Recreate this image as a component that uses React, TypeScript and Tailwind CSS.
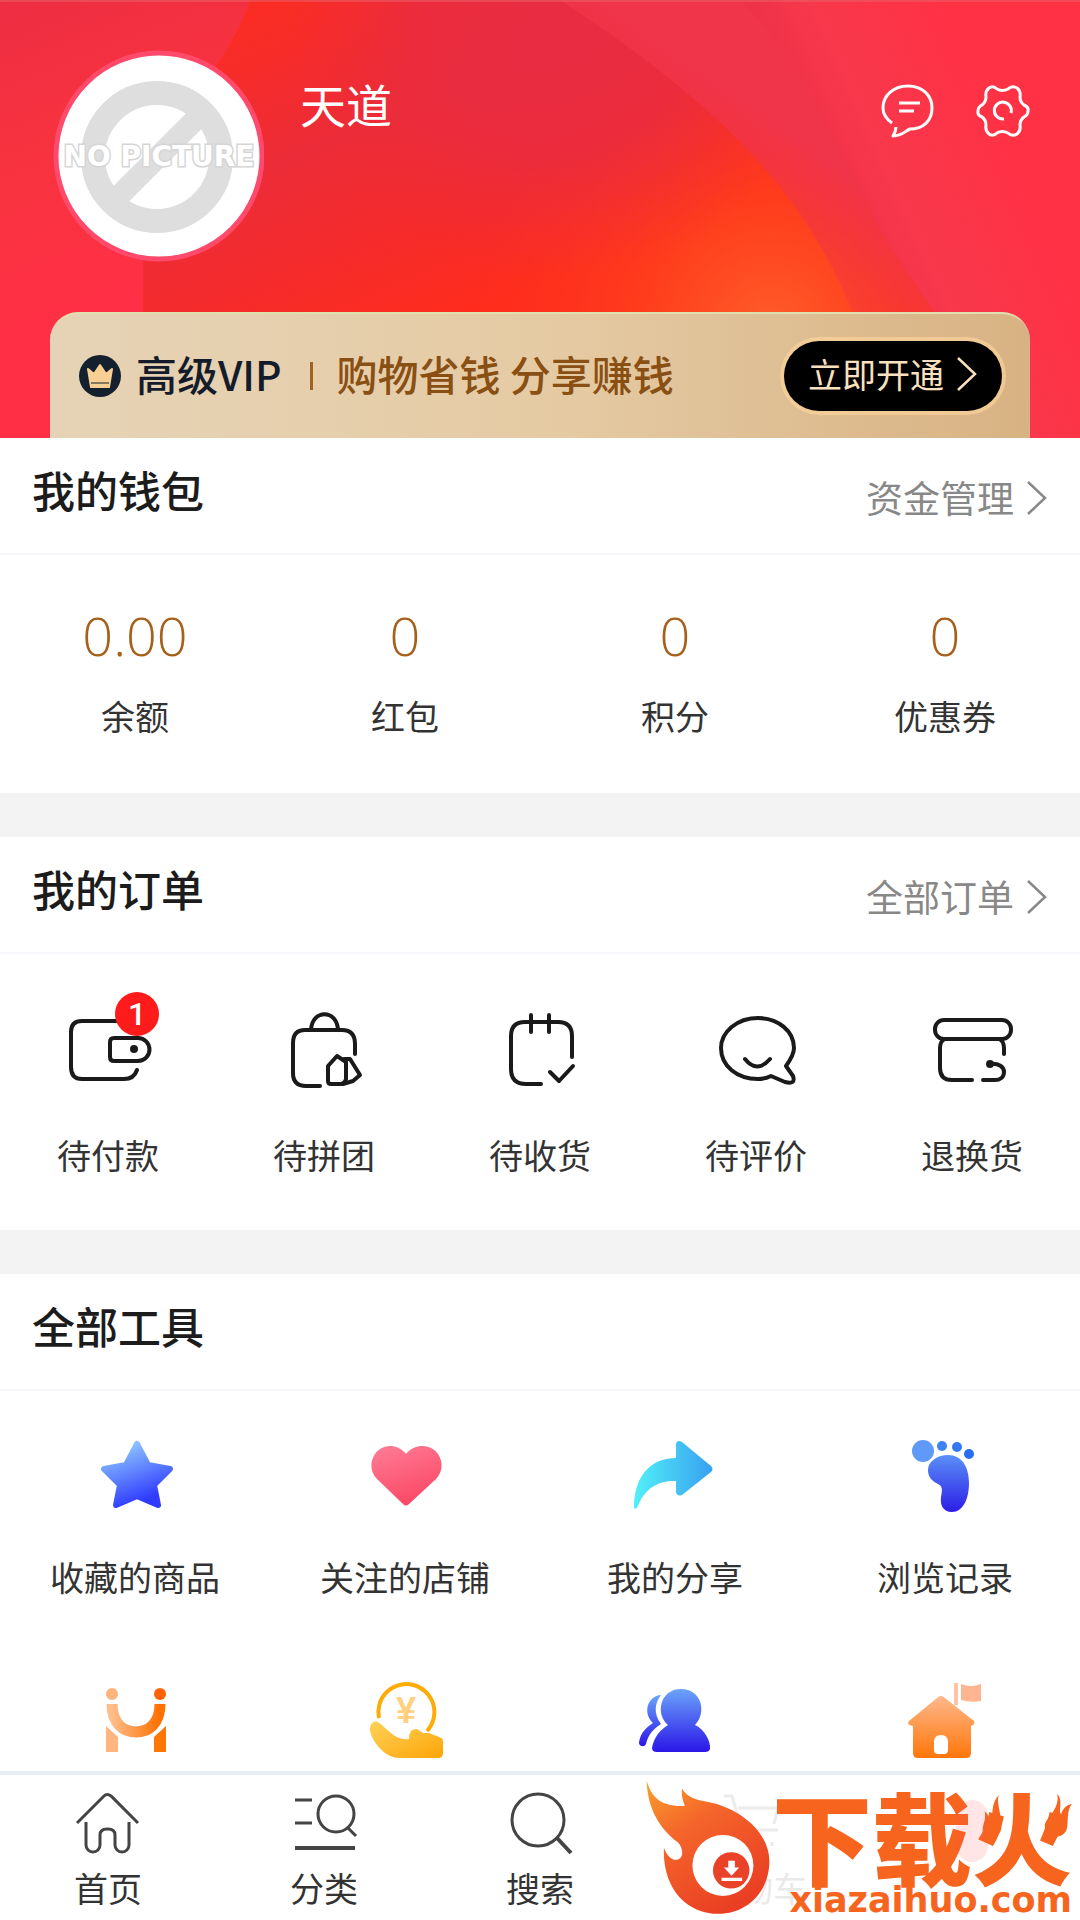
import type { ReactNode } from "react";

const wallet = [
  { value: "0.00", label: "余额" },
  { value: "0", label: "红包" },
  { value: "0", label: "积分" },
  { value: "0", label: "优惠券" },
];

const orders = [
  {
    label: "待付款",
    badge: 1,
    icon: (
      <>
        <path d="M56 15H18Q7 15 7 26V61Q7 73 18 73H60Q70 73 73 64" />
        <path d="M50 32H74a11.5 11.5 0 0 1 0 23H50q-4 0-4-4V36q0-4 4-4z" />
        <circle cx="70" cy="43" r="2" />
      </>
    ),
  },
  {
    label: "待拼团",
    icon: (
      <>
        <path d="M75 48V38Q75 24 62 24H25Q13 24 13 37V67Q13 80 26 80H40" />
        <path d="M31 24C32 3 57 3 58 24" />
        <path d="M48 60L57 50L66 56V73Q65 78 60 78H51Q48 78 48 75Z" />
        <path d="M64 53H70L80 69L73 75L63 78" />
      </>
    ),
  },
  {
    label: "待收货",
    icon: (
      <>
        <path d="M76 51V30Q76 16 62 16H29Q15 16 15 30V63Q15 78 30 78H45" />
        <path d="M35 9V26M53 9V26" />
        <path d="M54 66L63 75L77 60" />
      </>
    ),
  },
  {
    label: "待评价",
    icon: (
      <>
        <path d="M74 60C79 53 82 48 82 42C82 25 66 12 46 12C25 12 9 26 9 42C9 60 25 73 46 73Q53 73 59 70L73 76Q84 79 81 70Z" />
        <path d="M33 53Q45 68 58 53" />
      </>
    ),
  },
  {
    label: "退换货",
    icon: (
      <>
        <rect x="7" y="14" width="76" height="19" rx="9" />
        <path d="M76 48V42Q76 35 71 33M17 33Q12 35 12 42V62Q12 74 24 74H44" />
        <path d="M62 58C71 57 76 61 76 66C76 71 72 74 67 74H55" />
        <circle cx="62" cy="58" r="2" />
      </>
    ),
  },
];

const tools = [
  {
    label: "收藏的商品",
    icon: (
      <path
        d="M46 14L57 35L79 39L63 55L67 75L46 66L25 75L29 55L13 39L35 35Z"
        fill="url(#star)"
        stroke="url(#star)"
        strokeWidth="6"
        strokeLinejoin="round"
      />
    ),
  },
  {
    label: "关注的店铺",
    icon: (
      <path
        d="M45 24C36 13 21 14 14 24C8 33 10 43 16 49L42 74Q45 77 48 74L75 49C81 43 83 33 77 24C70 14 54 13 45 24Z"
        fill="url(#heart)"
      />
    ),
  },
  {
    label: "我的分享",
    icon: (
      <path
        d="M3 78C3 48 18 28 45 28V14Q46 9 51 12L80 36Q83 39 80 42L51 65Q46 67 45 62V51C26 50 13 60 7 76Q5 80 3 78Z"
        fill="url(#share)"
      />
    ),
  },
  {
    label: "浏览记录",
    icon: (
      <g fill="url(#foot)">
        <circle cx="22" cy="21" r="11" fill="#609af8" />
        <circle cx="41" cy="16" r="5" fill="#3d83f6" />
        <circle cx="56" cy="17" r="5" fill="#3478f5" />
        <circle cx="68" cy="24" r="5" fill="#286ef3" />
        <path d="M27 40C27 31 37 25 47 25C61 25 68 37 68 53C68 69 62 82 51 82C42 82 39 75 40 67C42 57 41 56 35 53C30 50 27 46 27 40Z" />
      </g>
    ),
  },
];

const moreTools = [
  {
    name: "合作",
    icon: (
      <>
        <circle cx="21" cy="19" r="6" fill="#ffb47c" />
        <circle cx="69" cy="19" r="6" fill="#fd6205" />
        <path d="M21 29C21 48 32 57 45 57C58 57 69 48 69 29" fill="none" stroke="url(#bridge)" strokeWidth="11" />
        <path d="M15 51L27 62V77H15Z" fill="#ffb580" />
        <path d="M63 62L75 51V77H63Z" fill="#ff7606" />
      </>
    ),
  },
  {
    name: "返利",
    icon: (
      <>
        <path d="M18 43A28 28 0 1 1 66 56" fill="none" stroke="#fdab06" strokeWidth="4" />
        <text x="45" y="48" textAnchor="middle" fontSize="36" className="fill-[#ffd080] font-['Liberation_Sans'] font-bold">
          ¥
        </text>
        <path
          d="M17 47C12 45 8 50 9 56C13 70 25 83 39 83H77Q82 83 82 78V66Q82 63 78 62L68 58H62L56 54Q48 53 48 64C34 66 27 54 17 47Z"
          fill="url(#hand)"
        />
      </>
    ),
  },
  {
    name: "团队",
    icon: (
      <g fill="url(#people)">
        <path d="M37 50C24 39 29 14 50 14C71 14 76 38 64 50C73 54 80 66 79 74Q78 77 74 77H26Q21 77 21 73C23 62 29 55 37 50Z" />
        <path d="M30 20C17 21 11 37 22 48C14 53 9 59 8 68C8 71 13 73 15 69C17 60 22 54 30 49C22 38 24 28 30 20Z" />
      </g>
    ),
  },
  {
    name: "店铺",
    icon: (
      <>
        <path
          d="M36 23Q40 19 44 23L73 46Q75 49 70 51V78Q70 83 65 83H17Q12 83 12 78V51Q5 50 8 46ZM33 75Q33 79 37 79H43Q47 79 47 75V67Q47 60 40 60Q33 60 33 67Z"
          fill="url(#house)"
          fillRule="evenodd"
        />
        <path d="M55 8V30" stroke="#ffc4a3" strokeWidth="4" />
        <path d="M60 9Q70 13 80 9V26Q70 28 60 25Z" fill="#ffb690" />
      </>
    ),
  },
];

const tabs = [
  {
    label: "首页",
    icon: <path d="M3 33L30 6Q33 3 37 6L64 33M12 32V55a7 7 0 0 0 14 0V45q0-6 7-6h1q7 0 7 6V55a7 7 0 0 0 14 0V32" />,
  },
  {
    label: "分类",
    icon: (
      <>
        <path d="M5 10H22M5 33H22M57 37L66 46" />
        <circle cx="46" cy="24" r="18" />
        <path d="M5 58H65" strokeWidth="4" />
      </>
    ),
  },
  {
    label: "搜索",
    icon: (
      <>
        <circle cx="32" cy="30" r="26" />
        <path d="M51 48L65 63" strokeWidth="4" />
      </>
    ),
  },
];

function Gradient({ id, from, to, x2 = "0", y2 = "1" }: { id: string; from: string; to: string; x2?: string; y2?: string }) {
  return (
    <linearGradient id={id} x1="0" y1="0" x2={x2} y2={y2}>
      <stop offset="0" stopColor={from} />
      <stop offset="1" stopColor={to} />
    </linearGradient>
  );
}

function Chevron({ className }: { className: string }) {
  return (
    <svg viewBox="0 0 22 36" fill="none" stroke="currentColor" strokeWidth="2.5" className={className} aria-hidden="true">
      <path d="M2 2L19 18L2 34" />
    </svg>
  );
}

function HeaderArt() {
  return (
    <svg viewBox="0 0 1080 438" preserveAspectRatio="none" className="absolute inset-0 size-full" aria-hidden="true">
      <defs>
        <linearGradient id="left" gradientUnits="userSpaceOnUse" x1="0" y1="0" x2="120" y2="300">
          <stop offset="0" stopColor="#ee2d43" />
          <stop offset="0.5" stopColor="#f8333f" />
          <stop offset="1" stopColor="#ff3045" />
        </linearGradient>
        <linearGradient id="middle" gradientUnits="userSpaceOnUse" x1="240" y1="0" x2="420" y2="438">
          <stop offset="0" stopColor="#fc2c22" />
          <stop offset="0.15" stopColor="#f62c2a" />
          <stop offset="0.35" stopColor="#ec2c38" />
          <stop offset="0.6" stopColor="#f62b2a" />
          <stop offset="0.8" stopColor="#ff2c1c" />
        </linearGradient>
        <radialGradient id="shade" gradientUnits="userSpaceOnUse" cx="560" cy="10" r="270">
          <stop offset="0" stopColor="#e92c42" />
          <stop offset="0.5" stopColor="#e92c42" stopOpacity="0.8" />
          <stop offset="1" stopColor="#ec2c38" stopOpacity="0" />
        </radialGradient>
        <radialGradient id="glow" gradientUnits="userSpaceOnUse" cx="770" cy="330" r="300">
          <stop offset="0" stopColor="#ff5d2a" />
          <stop offset="0.45" stopColor="#ff401c" stopOpacity="0.8" />
          <stop offset="1" stopColor="#ff3020" stopOpacity="0" />
        </radialGradient>
        <linearGradient id="sheet" gradientUnits="userSpaceOnUse" x1="690" y1="270" x2="790" y2="130">
          <stop offset="0" stopColor="#f4323a" stopOpacity="0" />
          <stop offset="1" stopColor="#f0344a" />
        </linearGradient>
        <linearGradient id="corner" gradientUnits="userSpaceOnUse" x1="780" y1="120" x2="960" y2="40">
          <stop offset="0" stopColor="#ec3047" />
          <stop offset="0.4" stopColor="#f8384c" />
          <stop offset="1" stopColor="#ff3145" />
        </linearGradient>
      </defs>
      <rect width="1080" height="438" fill="url(#left)" />
      <path d="M250 0C230 70 145 130 143 270V438H1080V0Z" fill="url(#middle)" />
      <rect width="1080" height="438" fill="url(#glow)" />
      <circle cx="560" cy="10" r="270" fill="url(#shade)" />
      <path d="M560 0H1080V438H890C850 260 790 150 560 0Z" fill="url(#sheet)" />
      <path d="M740 0C800 60 840 150 870 210C910 290 970 340 990 438H1080V0Z" fill="url(#corner)" />
      <rect width="1080" height="2" fill="#e95b64" opacity="0.6" />
    </svg>
  );
}

function Avatar() {
  return (
    <svg viewBox="0 0 214 214" className="size-[214px] shrink-0" role="img" aria-label="头像">
      <circle cx="109" cy="107" r="103" fill="#fff" stroke="#ff4a6c" strokeWidth="5" />
      <circle cx="107" cy="108" r="64" fill="none" stroke="#dedede" strokeWidth="24" />
      <path d="M65 151L151 65" stroke="#dedede" strokeWidth="22" />
      <text
        x="109"
        y="117"
        textAnchor="middle"
        fontSize="28"
        stroke="#d5d5d5"
        strokeWidth="3"
        paintOrder="stroke"
        className="fill-white font-['DejaVu_Sans'] font-bold"
      >
        NO PICTURE
      </text>
    </svg>
  );
}

function SectionHead({ title, more }: { title: string; more?: string }) {
  return (
    <div className="flex h-[117px] items-center justify-between border-b-2 border-[#f7f8fb] px-8 pb-3">
      <h2 className="text-[43px] leading-none font-medium text-[#1c1c1c]">{title}</h2>
      {more && (
        <a href="#" className="flex items-end gap-3 pt-4 text-[37px] leading-none text-[#888]">
          {more}
          <Chevron className="h-9 w-[22px]" />
        </a>
      )}
    </div>
  );
}

function ToolIcon({ children }: { children: ReactNode }) {
  return (
    <svg viewBox="0 0 88 88" className="size-[88px]" aria-hidden="true">
      {children}
    </svg>
  );
}

function Watermark() {
  return (
    <div className="absolute right-2 bottom-0 flex items-end text-[#f7641e]">
      <svg viewBox="60 60 386 410" className="mb-1 h-[137px] w-[128px]" aria-hidden="true">
        <defs>
          <linearGradient id="flame" x1="0" y1="0" x2="0.6" y2="1">
            <stop offset="0" stopColor="#fba02c" />
            <stop offset="0.4" stopColor="#f4652a" />
            <stop offset="1" stopColor="#ea3f24" />
          </linearGradient>
        </defs>
        <path
          d="M68 62C85 130 130 140 183 140C176 120 172 105 175 88C190 115 220 122 250 127C350 145 440 220 438 310C436 400 370 465 285 465C190 465 115 390 120 265C128 290 145 305 160 302C185 295 175 260 160 248C110 210 70 150 68 62Z"
          fill="url(#flame)"
        />
        <circle cx="298" cy="319" r="92" fill="#fff" />
        <circle cx="323" cy="334" r="55" fill="#ea4228" />
        <path d="M314 305H334V325H347L324 350L301 325H314ZM294 356H356V366H294Z" fill="#fff" />
      </svg>
      <div className="flex flex-col items-end">
        <div className="relative text-[100px] leading-[90px] font-black">
          下载火
          <svg viewBox="0 0 60 140" className="absolute top-1 right-[70px] h-12 w-5" aria-hidden="true">
            <path d="M52 0C40 20 60 60 58 100C56 130 10 145 3 115C-2 90 14 80 8 50C22 60 22 80 28 84C34 60 25 25 52 0Z" fill="currentColor" />
          </svg>
          <svg viewBox="0 0 85 135" className="absolute top-1 right-0 h-11 w-7" aria-hidden="true">
            <path d="M40 0C60 20 42 50 52 62C56 48 66 34 85 30C68 55 75 80 70 105C62 140 8 140 2 100C0 75 50 50 40 0Z" fill="currentColor" />
          </svg>
        </div>
        <div className="font-['DejaVu_Sans'] text-[35px] leading-[40px] font-bold">xiazaihuo.com</div>
      </div>
    </div>
  );
}

export default function App() {
  return (
    <div className="flex min-h-screen flex-col bg-white font-['Noto_Sans_CJK_SC',sans-serif] text-[#333]">
      <svg className="absolute size-0" aria-hidden="true">
        <defs>
          <Gradient id="star" from="#9bd8ff" to="#2f3cff" x2="0.4" />
          <Gradient id="heart" from="#ff7d95" to="#fb4a68" x2="0.4" />
          <Gradient id="share" from="#52f0f8" to="#38a0f0" x2="1" y2="0" />
          <Gradient id="foot" from="#5b8ff8" to="#2c1ee6" />
          <Gradient id="bridge" from="#ffbd8a" to="#ff7000" x2="1" y2="0" />
          <Gradient id="hand" from="#ffd257" to="#fca509" x2="1" />
          <Gradient id="people" from="#6ba4fa" to="#2b16e8" />
          <Gradient id="house" from="#ffb88c" to="#ff7609" />
        </defs>
      </svg>

      <header className="relative px-[50px] pt-[49px]">
        <HeaderArt />
        <div className="relative flex items-start">
          <Avatar />
          <h1 className="mt-[29px] ml-9 flex-1 text-[46px] leading-[50px] text-white">天道</h1>
          <div className="mt-[33px] flex gap-10 text-white">
            <button type="button" aria-label="消息">
              <svg viewBox="0 0 56 56" fill="none" stroke="currentColor" strokeWidth="3" strokeLinejoin="round" className="size-14" aria-hidden="true">
                <path d="M14 41C7 36 5 31 5 26C5 13 16 4 30 4C44 4 54 13 54 26C54 39 45 47 32 47C27 49 24 54 15 54Q18 49 18 45" />
                <path d="M21 21H42M21 29H36" />
              </svg>
            </button>
            <button type="button" aria-label="设置">
              <svg viewBox="0 0 56 56" fill="none" stroke="currentColor" strokeWidth="3" strokeLinejoin="round" className="size-14" aria-hidden="true">
                <path d="M15 6Q19 3 23 7Q28 10 34 7Q38 3 43 6Q47 9 46 15Q46 20 50 23Q55 25 54 29Q54 33 50 35Q46 38 46 43Q47 49 43 52Q38 55 34 51Q28 48 23 51Q19 55 15 52Q11 49 12 43Q12 38 8 35Q3 33 4 29Q4 25 8 23Q12 20 12 15Q11 9 15 6Z" />
                <path d="M37 31A8.5 8.5 0 1 0 30 37" />
              </svg>
            </button>
          </div>
        </div>

        <div className="relative mt-[49px] flex h-[126px] items-center rounded-t-[28px] border-t-2 border-[#dfe0ae] bg-linear-to-r from-[#e6d3b6] via-[#e5cba4] to-[#d8b283] pr-7 pl-7">
          <svg viewBox="0 0 44 44" className="size-11" aria-hidden="true">
            <circle cx="22" cy="22" r="21" fill="#15202f" />
            <path d="M10 15L16 20L22 11L28 20L34 15L31 33H13Z" fill="#f8cf92" stroke="#f8cf92" strokeWidth="2" strokeLinejoin="round" />
            <path d="M13 29H31" stroke="#15202f" />
          </svg>
          <strong className="ml-3.5 pb-1.5 text-[41px] leading-none font-medium text-[#141c2b]">高级VIP</strong>
          <span className="mr-6 ml-7 h-7 w-[3px] bg-[#a06420]" />
          <span className="flex-1 pb-1.5 text-[41px] leading-none font-medium text-[#8a4f12]">购物省钱 分享赚钱</span>
          <button
            type="button"
            className="flex h-[70px] items-center gap-3 rounded-full bg-black px-6 pb-1 text-[34px] leading-none text-[#f9e0be] ring-4 ring-[#ffd79d]/60"
          >
            立即开通
            <Chevron className="h-9 w-[22px]" />
          </button>
        </div>
      </header>

      <main className="flex flex-col gap-11 bg-[#f3f3f3]">
        <section className="bg-white">
          <SectionHead title="我的钱包" more="资金管理" />
          <dl className="grid h-[238px] grid-cols-4 pt-[46px] text-center">
            {wallet.map((item) => (
              <div key={item.label} className="flex flex-col-reverse justify-end">
                <dt className="mt-[27px] text-[34px] leading-10">{item.label}</dt>
                <dd className="font-['Open_Sans'] text-[54px] leading-[68px] font-light text-[#a5611b]">{item.value}</dd>
              </div>
            ))}
          </dl>
        </section>

        <section className="bg-white">
          <SectionHead title="我的订单" more="全部订单" />
          <ul className="grid grid-cols-5 pt-[52px] pb-[55px]">
            {orders.map((item) => (
              <li key={item.label}>
                <a href="#" className="flex flex-col items-center gap-[41px]">
                  <span className="relative">
                    <svg
                      viewBox="0 0 88 88"
                      fill="none"
                      stroke="#1a1a1a"
                      strokeWidth="4"
                      strokeLinecap="round"
                      strokeLinejoin="round"
                      className="size-[88px]"
                      aria-hidden="true"
                    >
                      {item.icon}
                    </svg>
                    {item.badge && (
                      <span className="absolute -top-3.5 left-[51px] flex size-11 items-center justify-center rounded-full bg-[#fd1b1b] font-['Roboto'] text-[32px] leading-none font-medium text-white">
                        {item.badge}
                      </span>
                    )}
                  </span>
                  <span className="text-[34px] leading-10">{item.label}</span>
                </a>
              </li>
            ))}
          </ul>
        </section>

        <section className="bg-white">
          <SectionHead title="全部工具" />
          <ul className="grid grid-cols-4 pt-[39px]">
            {tools.map((item) => (
              <li key={item.label}>
                <a href="#" className="flex flex-col items-center gap-[39px]">
                  <ToolIcon>{item.icon}</ToolIcon>
                  <span className="text-[34px] leading-10">{item.label}</span>
                </a>
              </li>
            ))}
          </ul>
          <ul className="grid grid-cols-4 pt-[78px] pb-1">
            {moreTools.map((item) => (
              <li key={item.name}>
                <a href="#" aria-label={item.name} className="flex justify-center">
                  <ToolIcon>{item.icon}</ToolIcon>
                </a>
              </li>
            ))}
          </ul>
        </section>
      </main>

      <nav className="sticky bottom-0 mt-auto grid h-[149px] grid-cols-5 border-t-4 border-[#e6edf4] bg-white pt-[15px]">
        {tabs.map((tab) => (
          <a key={tab.label} href="#" className="flex flex-col items-center gap-2.5">
            <svg viewBox="0 0 68 68" fill="none" stroke="#444" strokeWidth="3" className="size-[68px]" aria-hidden="true">
              {tab.icon}
            </svg>
            <span className="text-[34px] leading-10">{tab.label}</span>
          </a>
        ))}
        <a href="#" className="flex flex-col items-center gap-2.5 opacity-10">
          <svg viewBox="0 0 68 68" fill="none" stroke="#444" strokeWidth="3" className="size-[68px]" aria-hidden="true">
            <path d="M2 6H10L20 40H56M16 18H56L52 34M24 52V56M50 52V56" />
          </svg>
          <span className="text-[34px] leading-10">购物车</span>
        </a>
        <Watermark />
        <span className="absolute right-[92px] bottom-[58px] h-[62px] w-8 rounded-full bg-[#ff5050]/15" />
      </nav>
    </div>
  );
}
